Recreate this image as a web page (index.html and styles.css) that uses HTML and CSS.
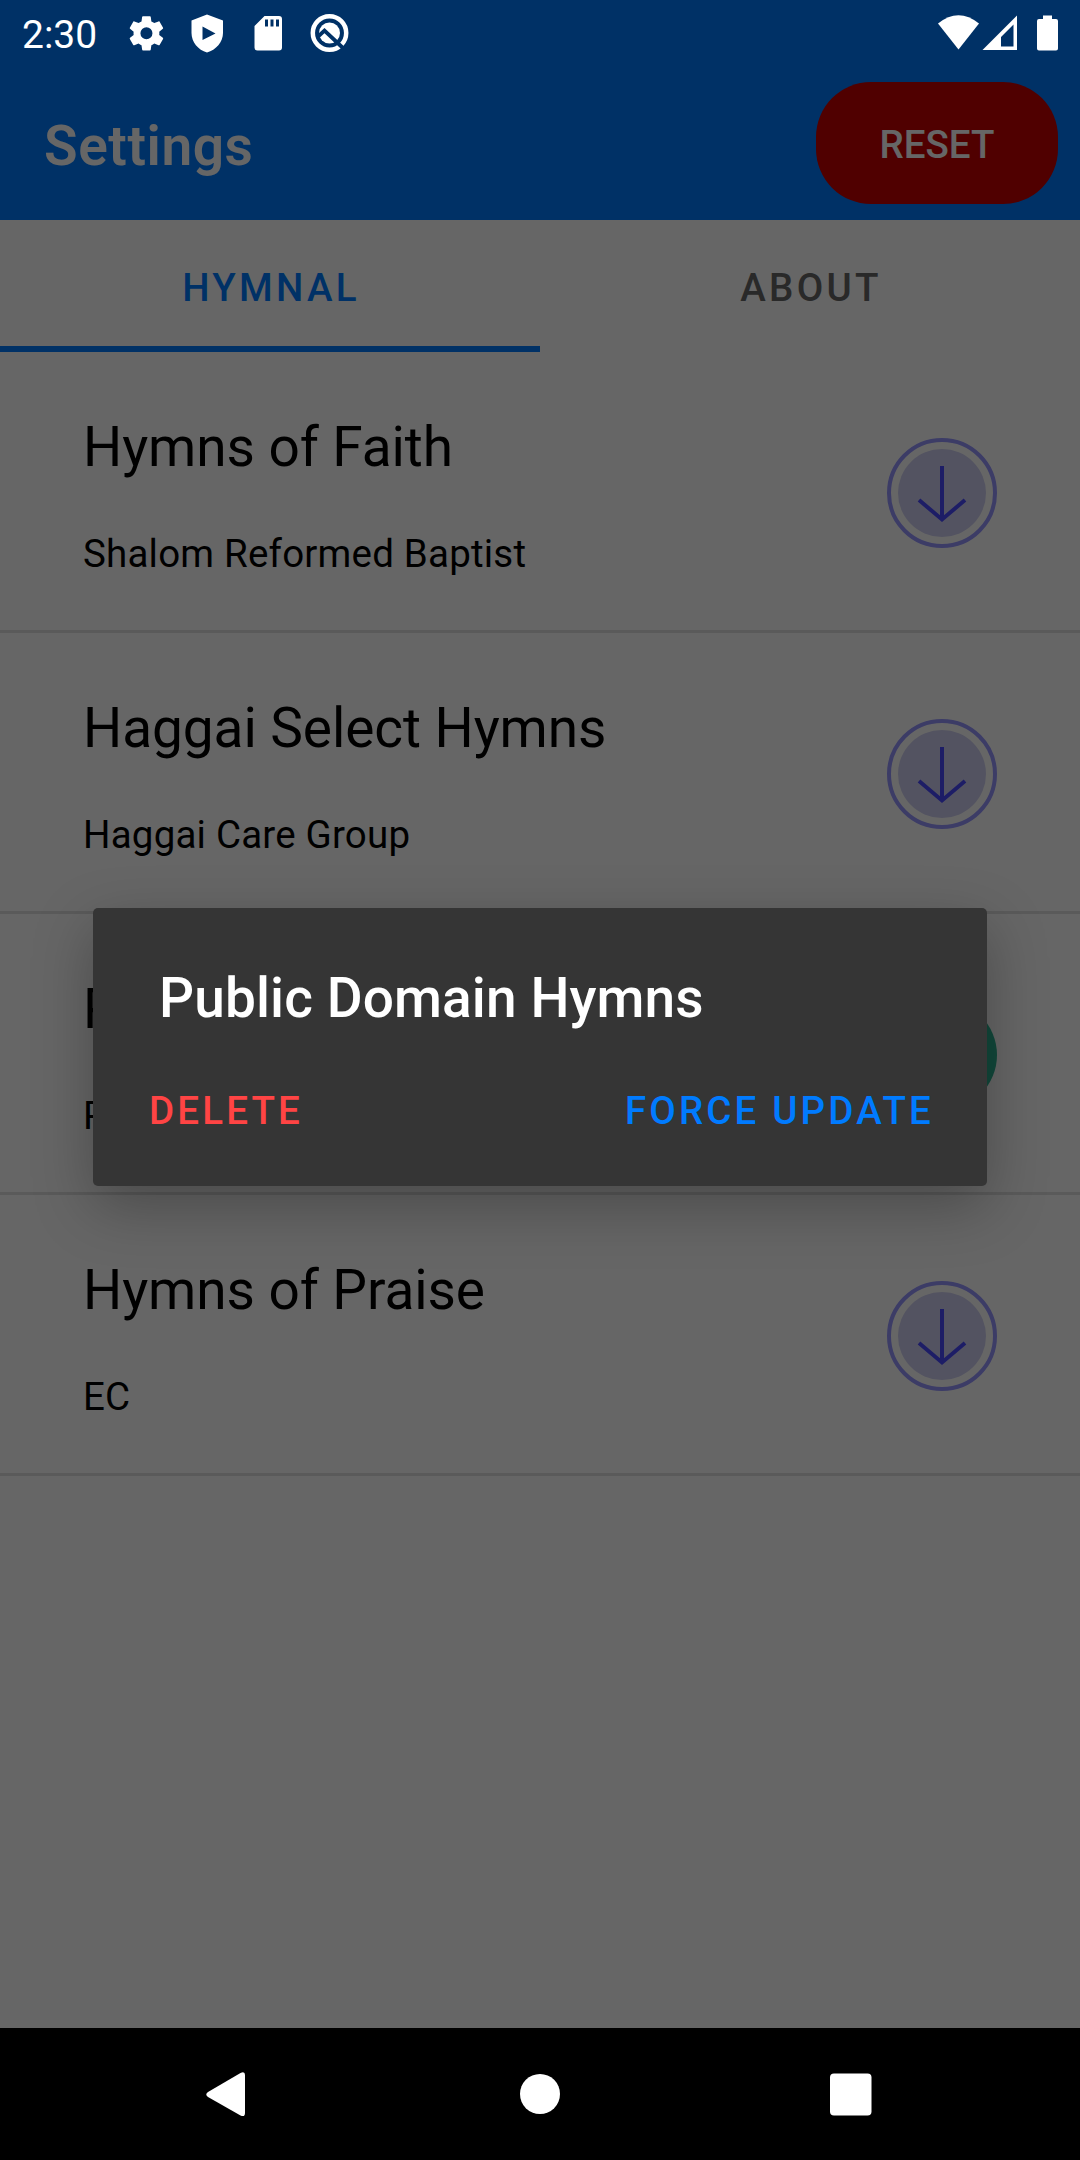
FILE: index.html
```
<!DOCTYPE html>
<html lang="en">
<head>
<meta charset="utf-8">
<title>Settings</title>
<link rel="stylesheet" href="styles.css">
</head>

<body>
    <div class="statusbar">
        <span class="clock">2:30</span>
        <!-- notification icons -->
        <svg class="icons-left" width="240" height="66" viewBox="120 0 240 66" fill="#fff">
            <g transform="translate(125.8 12.7) scale(1.72)"><path d="M19.43 12.98c.04-.32.07-.64.07-.98s-.03-.66-.07-.98l2.11-1.65c.19-.15.24-.42.12-.64l-2-3.46c-.12-.22-.39-.3-.61-.22l-2.49 1c-.52-.4-1.08-.73-1.69-.98l-.38-2.65C14.46 2.18 14.25 2 14 2h-4c-.25 0-.46.18-.49.42l-.38 2.65c-.61.25-1.17.59-1.69.98l-2.49-1c-.23-.09-.49 0-.61.22l-2 3.46c-.13.22-.07.49.12.64l2.11 1.65c-.04.32-.07.65-.07.98s.03.66.07.98l-2.11 1.65c-.19.15-.24.42-.12.64l2 3.46c.12.22.39.3.61.22l2.49-1c.52.4 1.08.73 1.69.98l.38 2.65c.03.24.24.42.49.42h4c.25 0 .46-.18.49-.42l.38-2.65c.61-.25 1.17-.59 1.69-.98l2.49 1c.23.09.49 0 .61-.22l2-3.46c.12-.22.07-.49-.12-.64zM12 15.5a3.5 3.5 0 1 1 0-7 3.5 3.5 0 0 1 0 7z"/></g>
            <path fill-rule="evenodd" d="M207 14.500L191.500 20.500V33C191.500 42 198 50 207 52.500C216 50 223 42 223 33V20.500ZM202.500 26.500L215.500 33.500L202.500 40Z"/>
            <path fill-rule="evenodd" d="M264.500 16H279Q282 16 282 19V47.500Q282 50.500 279 50.500H257.500Q254.500 50.500 254.500 47.500V26ZM265 19.500V26.500H268V19.500ZM270.500 19.500V26.500H273.500V19.500ZM276 19.500V26.500H279V19.500Z"/>
            <circle cx="329.500" cy="33" r="16.700" fill="none" stroke="#fff" stroke-width="4.500"/>
            <circle cx="329.500" cy="33" r="10.500"/>
            <path d="M317 37.500L324.500 30.500L343.500 48.500" fill="none" stroke="#003166" stroke-width="3.800"/>
        </svg>
        <!-- wifi, signal and battery -->
        <svg class="icons-right" width="122" height="66" viewBox="936 0 122 66" fill="#fff">
            <path d="M938 23.500Q958.500 7 979 23.500L958.500 49.500Z"/>
            <path fill-rule="evenodd" d="M1017 15.500V50H982.500ZM1013.500 24.500L1001 37V46.500H1013.500Z"/>
            <path d="M1043 15.500H1052V19H1056Q1058 19 1058 21V48.500Q1058 50.500 1056 50.500H1039Q1037 50.500 1037 48.500V21Q1037 19 1039 19H1043Z"/>
        </svg>
    </div>

    <div class="app">
        <div class="header">
            <h1>Settings</h1>
            <button class="reset">RESET</button>
        </div>

        <div class="tabs">
            <div class="tab active">HYMNAL</div>
            <div class="tab">ABOUT</div>
        </div>

        <div class="row">
            <div class="info">
                <p class="name">Hymns of Faith</p>
                <p class="source">Shalom Reformed Baptist</p>
            </div>
            <svg class="download" viewBox="0 0 110 110">
                <circle class="ring" cx="55" cy="55" r="53"/>
                <circle class="disc" cx="55" cy="55" r="44"/>
                <path class="arrow" d="M55 28V80M32 62L55 81.500L78 62"/>
            </svg>
        </div>

        <div class="row">
            <div class="info">
                <p class="name">Haggai Select Hymns</p>
                <p class="source">Haggai Care Group</p>
            </div>
            <svg class="download" viewBox="0 0 110 110">
                <circle class="ring" cx="55" cy="55" r="53"/>
                <circle class="disc" cx="55" cy="55" r="44"/>
                <path class="arrow" d="M55 28V80M32 62L55 81.500L78 62"/>
            </svg>
        </div>

        <!-- already downloaded, sits behind the dialog -->
        <div class="row">
            <div class="info">
                <p class="name">P</p>
                <p class="source">P</p>
            </div>
            <svg class="download" viewBox="0 0 110 110">
                <circle class="done" cx="55" cy="55" r="55"/>
            </svg>
        </div>

        <div class="row">
            <div class="info">
                <p class="name">Hymns of Praise</p>
                <p class="source">EC</p>
            </div>
            <svg class="download" viewBox="0 0 110 110">
                <circle class="ring" cx="55" cy="55" r="53"/>
                <circle class="disc" cx="55" cy="55" r="44"/>
                <path class="arrow" d="M55 28V80M32 62L55 81.500L78 62"/>
            </svg>
        </div>
    </div>

    <div class="overlay">
        <div class="dialog">
            <h2>Public Domain Hymns</h2>
            <div class="actions">
                <button class="delete">DELETE</button>
                <button class="update">FORCE UPDATE</button>
            </div>
        </div>
    </div>

    <div class="navbar">
        <svg width="1080" height="132" viewBox="0 0 1080 132" fill="#fff">
            <path d="M240.500 45Q245 43 245 47V85Q245 89.500 240.500 87.500L208 69Q204.500 66.500 208 64Z"/>
            <circle cx="540" cy="66" r="20"/>
            <rect x="830" y="45.500" width="41.500" height="42" rx="4"/>
        </svg>
    </div>
</body>
</html>
```
FILE: styles.css
```
* {
    box-sizing: border-box;
}

body {
    margin: 0;
    width: 1080px;
    height: 2160px;
    display: flex;
    flex-direction: column;
    position: relative;
    overflow: hidden;
    background-color: white;
    font-family: Roboto, sans-serif;
}

h1, h2, p {
    margin: 0;
}

button {
    border: none;
    padding: 0;
    background: none;
    font-family: inherit;
    font-size: 38.5px;
    font-weight: 500;
}

.statusbar {
    height: 66px;
    display: flex;
    background-color: #003166;
    color: white;
    z-index: 2;
}

.clock {
    width: 98px;
    margin-left: 22px;
    font-size: 39px;
    line-height: 70px;
}

.icons-right {
    margin-left: auto;
    margin-right: 22px;
}

.app {
    flex: 1;
}

.header {
    height: 154px;
    padding: 0 22px 0 44px;
    display: flex;
    justify-content: space-between;
    background-color: #007bff;
}

h1 {
    color: white;
    font-size: 55px;
    font-weight: 600;
    letter-spacing: 0.6px;
    line-height: 160px;
}

.reset {
    width: 242px;
    height: 122px;
    margin-top: 16px;
    padding-top: 2px;
    border-radius: 55px;
    background-color: #c80000;
    color: white;
}

.tabs {
    height: 132px;
    display: flex;
}

.tab {
    flex: 1;
    padding-left: 2px;
    border-bottom: 6px solid transparent;
    color: #666;
    font-size: 38.5px;
    font-weight: 500;
    letter-spacing: 3.3px;
    line-height: 135px;
    text-align: center;
}

.tab.active {
    border-bottom-color: #007bff;
    color: #007bff;
}

.row {
    height: 281px;
    padding: 0 83px;
    display: flex;
    justify-content: space-between;
    border-bottom: 3px solid #e0e0e0;
}

.name {
    padding-top: 60px;
    font-size: 55px;
    letter-spacing: -0.08px;
    line-height: 70px;
}

.source {
    padding-top: 47px;
    font-size: 38.5px;
    letter-spacing: 0.2px;
    line-height: 50px;
}

.download {
    width: 110px;
    height: 110px;
    margin-top: 85.5px;
}

.ring {
    fill: none;
    stroke: #9696ff;
    stroke-width: 4;
}

.disc {
    fill: #d0d0f2;
}

.arrow {
    fill: none;
    stroke: #4a4aff;
    stroke-width: 4;
}

.done {
    fill: #2fb494;
}

/* dims the whole screen except the system bars */
.overlay {
    position: absolute;
    top: 0;
    left: 0;
    width: 1080px;
    height: 2028px;
    padding-top: 908px;
    background-color: rgba(0, 0, 0, 0.6);
}

.dialog {
    width: 894px;
    height: 278px;
    margin: 0 auto;
    padding: 55px 53px 0 56px;
    border-radius: 5px;
    background-color: #353535;
    box-shadow: 0 20px 60px rgba(0, 0, 0, 0.28);
}

h2 {
    padding-left: 10px;
    color: white;
    font-size: 55px;
    font-weight: 500;
    letter-spacing: 0.1px;
    line-height: 70px;
}

.actions {
    display: flex;
    justify-content: space-between;
    padding-top: 53px;
}

.actions button {
    letter-spacing: 3.15px;
    line-height: 50px;
}

.delete {
    color: #ff4444;
}

.update {
    color: #007bff;
}

.navbar {
    height: 132px;
    background-color: black;
}
```
